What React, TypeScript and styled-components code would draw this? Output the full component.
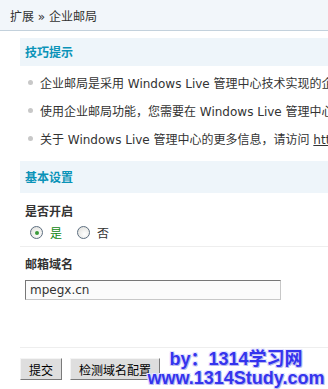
import styled, { createGlobalStyle } from 'styled-components';

const GlobalStyle = createGlobalStyle`
  body {
    margin: 0;
    background: #fff;
    font: 12px "DejaVu Sans", "Noto Sans CJK SC", sans-serif;
    color: #333;
  }
`;

const Page = styled.div`
  position: relative;
  width: 328px;
  height: 389px;
  overflow: hidden;
  background: #fff;
`;

const Nav = styled.div`
  display: flex;
  align-items: center;
  height: 30px;
  padding-left: 10px;
  background: #f2f6fa;
  border-bottom: 1px solid #c3d1dc;
  color: #333;
  white-space: nowrap;
`;

const Main = styled.div`
  padding: 7px 0 0 20px;
`;

const SectionTitle = styled.div<{ $height: number; $gap?: number }>`
  height: ${(p) => p.$height}px;
  line-height: ${(p) => p.$height}px;
  margin-top: ${(p) => p.$gap ?? 0}px;
  padding-left: 5px;
  background: #eef5fa;
  color: #0a93b8;
  font-weight: bold;
  font-family: "Noto Sans CJK SC", sans-serif;
`;

const TipList = styled.ul`
  list-style: none;
  margin: 0;
  padding: 2px 0 0 8px;
`;

const Tip = styled.li`
  display: flex;
  align-items: center;
  gap: 7px;
  height: 28px;
  white-space: nowrap;
  color: #333;

  &::before {
    content: '';
    flex: none;
    width: 5px;
    height: 5px;
    border-radius: 50%;
    background: #c8c8c8;
  }

  a {
    color: #333;
  }
`;

const Field = styled.div<{ $top: number; $bottom: number }>`
  padding: ${(p) => p.$top}px 0 ${(p) => p.$bottom}px 5px;
  border-bottom: 1px solid #eeeeee;
`;

const Label = styled.div`
  line-height: 20px;
  font-weight: bold;
  color: #333;
  font-family: "Noto Sans CJK SC", sans-serif;
`;

const RadioRow = styled.div`
  display: flex;
  align-items: center;
  height: 23px;
  padding-left: 5px;
`;

const RadioOption = styled.label<{ $checked?: boolean }>`
  display: flex;
  align-items: center;
  gap: 7px;
  margin-right: 15px;
  color: ${(p) => (p.$checked ? '#118811' : '#333')};
`;

const RadioDot = styled.span<{ $checked?: boolean }>`
  display: flex;
  align-items: center;
  justify-content: center;
  width: 11px;
  height: 11px;
  border: 1px solid #5d6e80;
  border-radius: 50%;
  background: radial-gradient(circle at 60% 65%, #ffffff, #dcdcd8);

  &::after {
    content: '';
    display: ${(p) => (p.$checked ? 'block' : 'none')};
    width: 4px;
    height: 4px;
    border-radius: 50%;
    background: #3a9a3a;
  }
`;

const TextInput = styled.input`
  display: block;
  box-sizing: border-box;
  width: 256px;
  height: 20px;
  margin-top: 6px;
  padding: 0 4px;
  border: 1px solid;
  border-color: #777 #c8c8c8 #c8c8c8 #777;
  background: #fbfbfb;
  font: 12px "DejaVu Sans", sans-serif;
  color: #333;
  outline: none;
`;

const Actions = styled.div`
  display: flex;
  gap: 8px;
  padding-top: 10px;
`;

const Button = styled.button`
  height: 22px;
  padding: 0 8px;
  border: 1px solid;
  border-color: #f4f4f4 #7a7a7a #7a7a7a #f4f4f4;
  background: #dedede;
  color: #000;
  font: 12px "Noto Sans CJK SC", sans-serif;
`;

const Watermark = styled.div`
  position: absolute;
  left: 144px;
  top: 350px;
  width: 184px;
  text-align: center;
  font: bold 18px/19px "Liberation Sans", "Noto Sans CJK SC", sans-serif;
  color: #3434ee;
  white-space: nowrap;
  text-shadow: 1px 1px 0 #b8b8f0, -1px -1px 0 #e8e8ff, 1px -1px 0 #e0e0ff,
    -1px 1px 0 #d8d8f8;
`;

export default function App() {
  return (
    <Page>
      <GlobalStyle />
      <Nav>扩展 » 企业邮局</Nav>
      <Main>
        <SectionTitle $height={28}>技巧提示</SectionTitle>
        <TipList>
          <Tip>企业邮局是采用 Windows Live 管理中心技术实现的企业邮局服务</Tip>
          <Tip>使用企业邮局功能，您需要在 Windows Live 管理中心注册</Tip>
          <Tip>
            <span>
              关于 Windows Live 管理中心的更多信息，请访问{' '}
              <a href="#">http://domains.live.com</a>
            </span>
          </Tip>
        </TipList>
        <SectionTitle $height={32} $gap={9}>
          基本设置
        </SectionTitle>
        <Field $top={8} $bottom={2}>
          <Label>是否开启</Label>
          <RadioRow>
            <RadioOption $checked>
              <RadioDot $checked />是
            </RadioOption>
            <RadioOption>
              <RadioDot />否
            </RadioOption>
          </RadioRow>
        </Field>
        <Field $top={7} $bottom={47}>
          <Label>邮箱域名</Label>
          <TextInput defaultValue="mpegx.cn" />
        </Field>
        <Actions>
          <Button>提交</Button>
          <Button>检测域名配置</Button>
        </Actions>
      </Main>
      <Watermark>
        <div>by：1314学习网</div>
        <div>www.1314Study.com</div>
      </Watermark>
    </Page>
  );
}
